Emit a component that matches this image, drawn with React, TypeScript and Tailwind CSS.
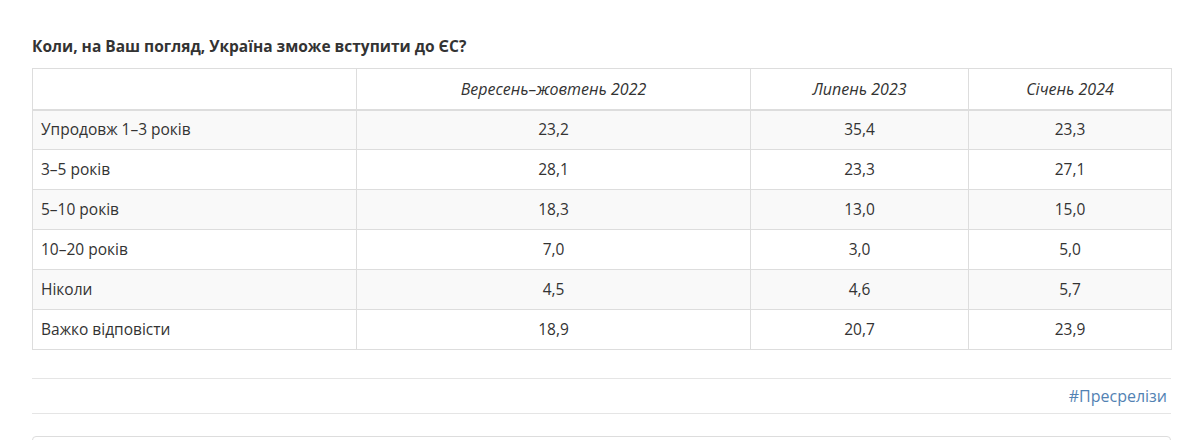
const rows: [string, string, string, string][] = [
  ["Упродовж 1–3 років", "23,2", "35,4", "23,3"],
  ["3–5 років", "28,1", "23,3", "27,1"],
  ["5–10 років", "18,3", "13,0", "15,0"],
  ["10–20 років", "7,0", "3,0", "5,0"],
  ["Ніколи", "4,5", "4,6", "5,7"],
  ["Важко відповісти", "18,9", "20,7", "23,9"],
];

const App = () => {
  return (
    <div className="w-[1191px] h-[440px] overflow-hidden bg-white text-[#333] font-['Open_Sans',sans-serif]">
      <div className="ml-[32px] w-[1139px] pt-[36px]">
        <h3 className="font-bold text-[15.5px] leading-[20px] text-[#333] mb-[12px]">
          Коли, на Ваш погляд, Україна зможе вступити до ЄС?
        </h3>
        <table className="w-full border-collapse table-fixed text-[15.5px]">
          <colgroup>
            <col className="w-[324px]" />
            <col className="w-[394px]" />
            <col className="w-[218px]" />
            <col className="w-[203px]" />
          </colgroup>
          <thead>
            <tr className="h-[41px] text-[16px]">
              <th className="border border-[#ddd] border-b-2" />
              <th className="border border-[#ddd] border-b-2 font-normal italic text-center">Вересень–жовтень 2022</th>
              <th className="border border-[#ddd] border-b-2 font-normal italic text-center">Липень 2023</th>
              <th className="border border-[#ddd] border-b-2 font-normal italic text-center">Січень 2024</th>
            </tr>
          </thead>
          <tbody>
            {rows.map((r, i) => (
              <tr key={r[0]} className={i % 2 === 0 ? "h-[40px] bg-[#f9f9f9]" : "h-[40px] bg-white"}>
                <td className="border border-[#ddd] pl-[8px] pr-2">{r[0]}</td>
                <td className="border border-[#ddd] text-center">{r[1]}</td>
                <td className="border border-[#ddd] text-center">{r[2]}</td>
                <td className="border border-[#ddd] text-center">{r[3]}</td>
              </tr>
            ))}
          </tbody>
        </table>
        <div className="mt-[28px] border-t border-b border-[#e5e5e5] h-[36px] flex items-center justify-end pr-[4px]">
          <a href="#" className="text-[#5282b3] text-[16px]">#Пресрелізи</a>
        </div>
        <div className="mt-[22px] h-[40px] border border-[#ddd] rounded-[4px]" />
      </div>
    </div>
  );
};

export default App;
